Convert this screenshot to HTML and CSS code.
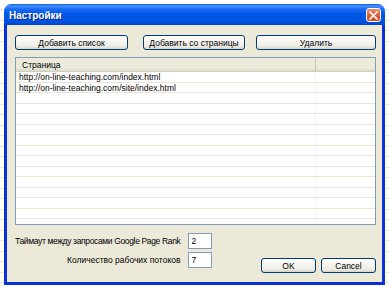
FILE: index.html
```html
<!DOCTYPE html>
<html lang="ru">
<head>
    <meta charset="UTF-8">
    <title>Настройки</title>
    <link rel="stylesheet" href="styles.css">
</head>
<body>

    <div class="window">
        <div class="titlebar">
            <span class="title">Настройки</span>
            <span class="close">
                <svg width="9" height="9" viewBox="0 0 9 9">
                    <path d="M1 1 L8 8 M8 1 L1 8" stroke="#fff" stroke-width="1.6" stroke-linecap="square"/>
                </svg>
            </span>
        </div>

        <div class="client">
            <div class="toolbar">
                <button class="btn btn-add">Добавить список</button>
                <button class="btn btn-page">Добавить со страницы</button>
                <button class="btn btn-delete">Удалить</button>
            </div>

            <div class="list">
                <div class="list-head">
                    <div class="col-url">Страница</div>
                    <div class="col-rest"></div>
                </div>
                <div class="list-body">
                    <div class="row"><div class="col-url">http://on-line-teaching.com/index.html</div><div class="col-rest"></div></div>
                    <div class="row"><div class="col-url">http://on-line-teaching.com/site/index.html</div><div class="col-rest"></div></div>
                    <div class="row"><div class="col-url"></div><div class="col-rest"></div></div>
                    <div class="row"><div class="col-url"></div><div class="col-rest"></div></div>
                    <div class="row"><div class="col-url"></div><div class="col-rest"></div></div>
                    <div class="row"><div class="col-url"></div><div class="col-rest"></div></div>
                    <div class="row"><div class="col-url"></div><div class="col-rest"></div></div>
                    <div class="row"><div class="col-url"></div><div class="col-rest"></div></div>
                    <div class="row"><div class="col-url"></div><div class="col-rest"></div></div>
                    <div class="row"><div class="col-url"></div><div class="col-rest"></div></div>
                    <div class="row"><div class="col-url"></div><div class="col-rest"></div></div>
                    <div class="row"><div class="col-url"></div><div class="col-rest"></div></div>
                    <div class="row"><div class="col-url"></div><div class="col-rest"></div></div>
                    <div class="row"><div class="col-url"></div><div class="col-rest"></div></div>
                    <div class="row"><div class="col-url"></div><div class="col-rest"></div></div>
                </div>
            </div>

            <div class="footer">
                <div class="settings">
                    <label class="label-timeout">Таймаут между запросами Google Page Rank</label>
                    <input class="field" value="2">
                    <label>Количество рабочих потоков</label>
                    <input class="field" value="7">
                </div>
                <div class="actions">
                    <button class="btn btn-ok">OK</button>
                    <button class="btn btn-cancel">Cancel</button>
                </div>
            </div>
        </div>
    </div>

</body>
</html>
```

FILE: styles.css
```css
body {
    margin: 0;
    width: 389px;
    height: 287px;
    overflow: hidden;
    font-family: 'Liberation Sans', Arial, sans-serif;
    font-size: 8.5px;
    color: #000;
    background: repeating-linear-gradient(to bottom, #fff 0, #fff 9.5px, #e4e4e4 9.5px, #e4e4e4 10.5px);
}

.window {
    margin: 4px 0 0 4px;
    width: 381px;
    height: 281px;
    display: flex;
    flex-direction: column;
}

.titlebar {
    height: 21px;
    box-sizing: border-box;
    padding: 0 4px 0 5px;
    display: flex;
    align-items: center;
    justify-content: space-between;
    border-radius: 7px 7px 0 0;
    background: linear-gradient(to bottom, #0a5ff0 0, #4a94ff 2px, #1a6af5 5px, #0058e6 10px, #0053e0 17px, #0046cc 21px);
}

.title {
    color: #fff;
    font-size: 10px;
    font-weight: bold;
    padding-top: 1px;
    text-shadow: 1px 1px 0 #0a2a8c;
}

.close {
    width: 15px;
    height: 14px;
    box-sizing: border-box;
    margin-top: 1px;
    display: flex;
    align-items: center;
    justify-content: center;
    border: 1px solid #fff;
    border-radius: 3px;
    background: linear-gradient(to bottom, #e88a6a, #d9592e 60%, #c94a22);
}

.client {
    flex: 1;
    display: flex;
    flex-direction: column;
    padding: 10px 6px 0 8px;
    background: #ece9d8;
    border: 3px solid #0831d9;
    border-top: 0;
}

.btn {
    height: 15px;
    padding: 0;
    font-family: inherit;
    font-size: 8.5px;
    color: #000;
    border: 1px solid #003c74;
    border-radius: 3px;
    background: linear-gradient(to bottom, #fff 0, #f6f5f0 40%, #ecebe4 80%, #d8d3c6 100%);
}

.toolbar {
    display: flex;
}

.btn-add {
    width: 113px;
}

.btn-page {
    width: 102px;
    margin-left: 15px;
}

.btn-delete {
    width: 120px;
    margin-left: 11px;
}

.list {
    margin-top: 7px;
    height: 168px;
    box-sizing: border-box;
    border: 1px solid #7f9db9;
    background: #fff;
    overflow: hidden;
}

.list-head {
    display: flex;
    height: 14px;
    box-sizing: border-box;
    background: #ebeadb;
    border-bottom: 1px solid #d0cdbd;
    box-shadow: inset 0 -2px 0 #e2dfcf;
}

.list-head .col-url {
    width: 300px;
    box-sizing: border-box;
    padding: 2px 0 0 6px;
    border-right: 1px solid #c8c5b4;
}

.row {
    display: flex;
    height: 10.5px;
    box-sizing: border-box;
    border-bottom: 1px solid #e8e5d5;
    line-height: 10px;
}

.row .col-url {
    width: 300px;
    box-sizing: border-box;
    padding-left: 3px;
    white-space: nowrap;
    border-right: 1px dotted #f0eee6;
}

.col-rest {
    flex: 1;
}

.footer {
    display: flex;
    align-items: flex-start;
    margin-top: 8px;
}

.settings {
    display: grid;
    grid-template-columns: auto 24px;
    column-gap: 8px;
    row-gap: 3px;
    align-items: center;
}

.settings label {
    justify-self: end;
}

.label-timeout {
    letter-spacing: -0.35px;
}

.field {
    width: 24px;
    height: 16px;
    box-sizing: border-box;
    padding: 0 0 0 2px;
    font-family: inherit;
    font-size: 8.5px;
    border: 1px solid #7f9db9;
    background: #fff;
}

.actions {
    display: flex;
    gap: 5px;
    margin-top: 25px;
    margin-left: auto;
}

.btn-ok,
.btn-cancel {
    width: 55px;
}
```
